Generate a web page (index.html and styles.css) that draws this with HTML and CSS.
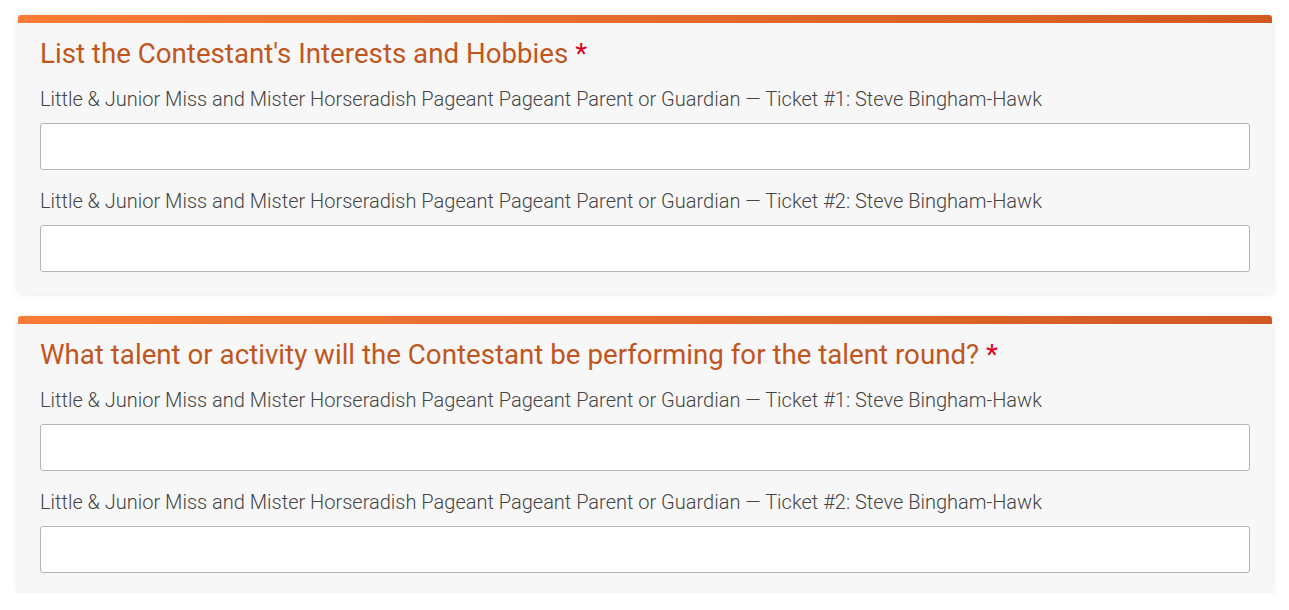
FILE: index.html
```html
<!DOCTYPE html>
<html>
<head>
<meta charset="utf-8">
<link rel="stylesheet" href="styles.css">
</head>
<body>
<div class="page">
  <section class="card">
    <div class="card-bar"></div>
    <div class="card-body">
      <h2 class="question">List the Contestant's Interests and Hobbies <span class="req">*</span></h2>
      <div class="field">
        <label class="field-label">Little &amp; Junior Miss and Mister Horseradish Pageant Pageant Parent or Guardian — Ticket #1: Steve Bingham-Hawk</label>
        <input class="field-input" type="text">
      </div>
      <div class="field">
        <label class="field-label">Little &amp; Junior Miss and Mister Horseradish Pageant Pageant Parent or Guardian — Ticket #2: Steve Bingham-Hawk</label>
        <input class="field-input" type="text">
      </div>
    </div>
  </section>
  <section class="card">
    <div class="card-bar"></div>
    <div class="card-body">
      <h2 class="question">What talent or activity will the Contestant be performing for the talent round? <span class="req">*</span></h2>
      <div class="field">
        <label class="field-label">Little &amp; Junior Miss and Mister Horseradish Pageant Pageant Parent or Guardian — Ticket #1: Steve Bingham-Hawk</label>
        <input class="field-input" type="text">
      </div>
      <div class="field">
        <label class="field-label">Little &amp; Junior Miss and Mister Horseradish Pageant Pageant Parent or Guardian — Ticket #2: Steve Bingham-Hawk</label>
        <input class="field-input" type="text">
      </div>
    </div>
  </section>
</div>
</body>
</html>
```
FILE: styles.css
```css
html, body {
  margin: 0;
  padding: 0;
  background: #ffffff;
}
body {
  font-family: Roboto, "Liberation Sans", sans-serif;
}
.page {
  padding: 15px 17px 0 18px;
  display: flex;
  flex-direction: column;
  gap: 23px;
}
.card {
  background: #f7f7f7;
  border-radius: 3px;
  box-shadow: 0 1px 8px rgba(0, 0, 0, 0.09);
  overflow: hidden;
}
.card-bar {
  height: 8px;
  background: linear-gradient(90deg, #f97c36 0%, #d05a22 100%);
}
.card-body {
  padding: 14px 22px 21px 22px;
}
.question {
  margin: 0 0 16px 0;
  font-size: 27.7px;
  line-height: 34px;
  font-weight: 400;
  color: #c0561e;
}
.req {
  color: #e0001b;
}
.field {
  display: flex;
  flex-direction: column;
  gap: 12px;
  margin-bottom: 19px;
}
.field:last-child {
  margin-bottom: 0;
}
.field-label {
  font-size: 20px;
  line-height: 24px;
  font-weight: 300;
  color: #444444;
}
.field-input {
  box-sizing: border-box;
  height: 47px;
  width: 100%;
  margin: 0;
  border: 1px solid #b5b5b5;
  border-radius: 3px;
  background: #ffffff;
  font-family: inherit;
  font-size: 18px;
}
```
